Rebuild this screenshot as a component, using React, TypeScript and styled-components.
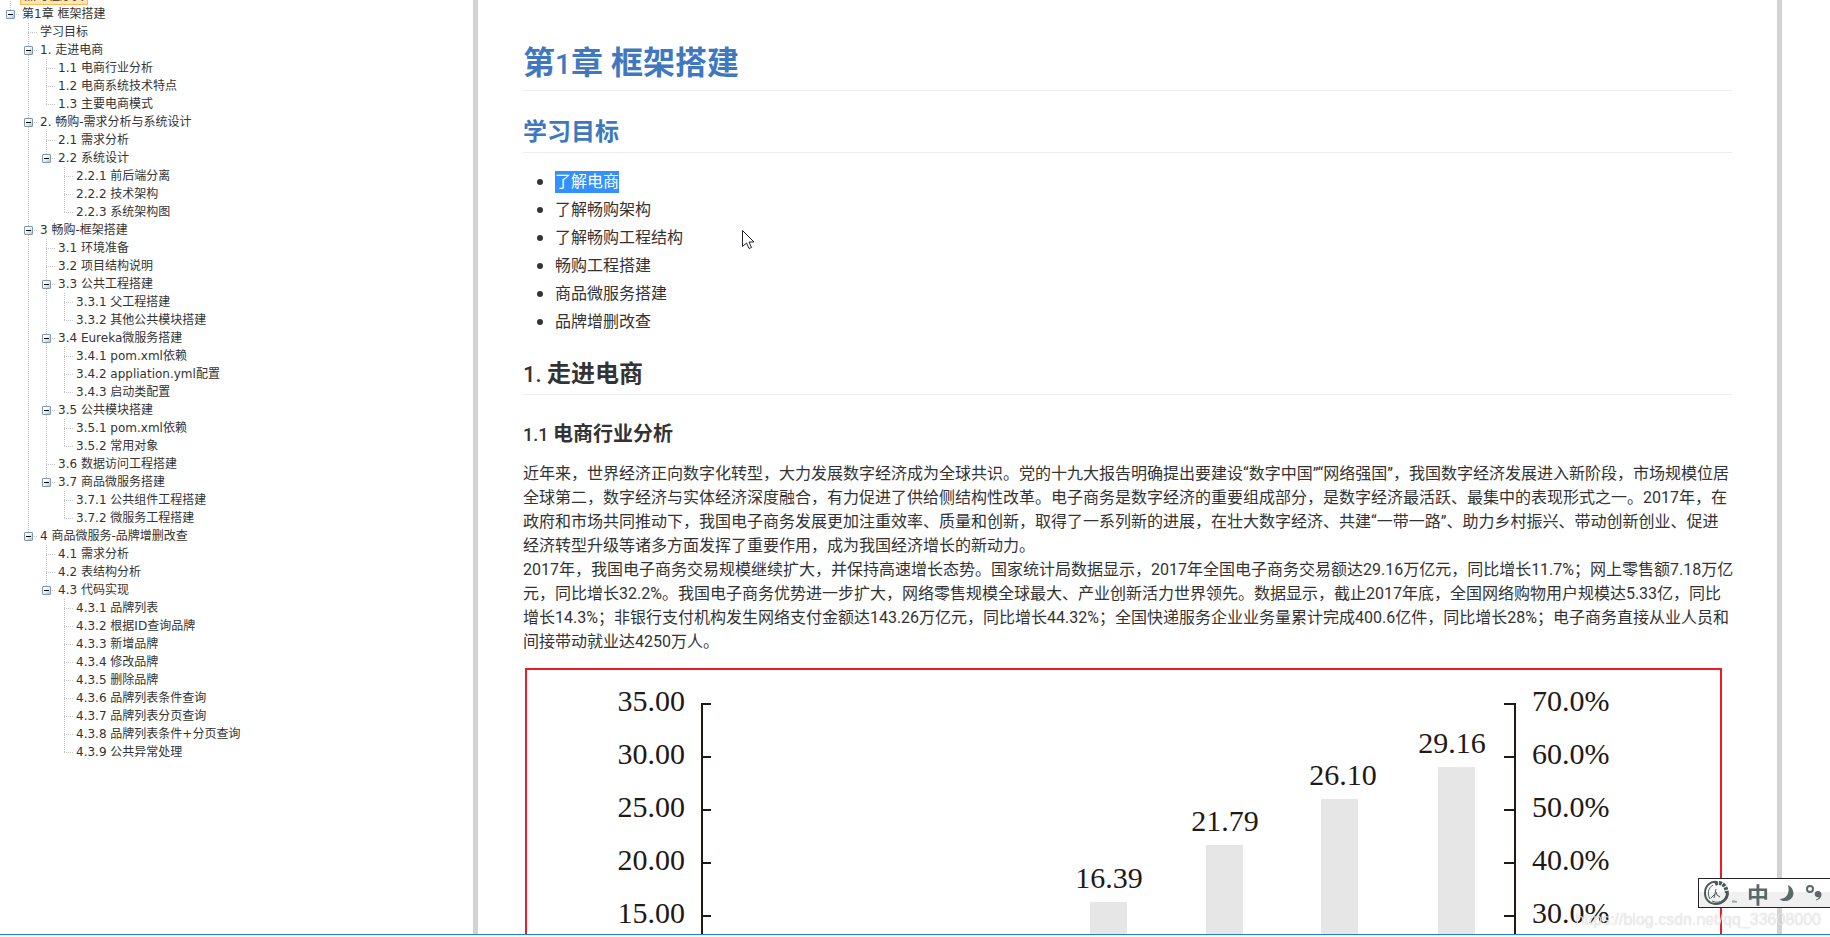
import React from "react";
import styled, { createGlobalStyle, css } from "styled-components";

const GlobalStyle = createGlobalStyle`
  html, body, #root { height: 100%; }
  body { margin: 0; background: #fff; overflow: hidden; }
  *, *::before, *::after { box-sizing: border-box; }
`;

const Page = styled.div`
  display: flex;
  height: 100vh;
  overflow: hidden;
  background: #fff;
  border-bottom: 3px solid #fff;
  font-family: Roboto, "Noto Sans CJK SC", sans-serif;
  color: #333;
`;

const Sidebar = styled.nav`
  flex: 0 0 478px;
  border-right: 5px solid #d3d3d3;
  overflow: hidden;
  font: 12px/18px "DejaVu Sans", "Noto Sans CJK SC", sans-serif;
`;

const TreeRoot = styled.ul`
  list-style: none;
  margin: -13px 0 0;
  padding: 0 0 0 1px;
`;

const Branch = styled.ul`
  list-style: none;
  margin: 0;
  padding: 0 0 0 18px;
`;

const Node = styled.li<{ $last: boolean }>`
  background: repeating-linear-gradient(#c4c4c4 0 1px, transparent 1px 2px) no-repeat 9px
    0 / 1px ${(p) => (p.$last ? "10px" : "100%")};
`;

const NodeRow = styled.div`
  display: flex;
  height: 18px;
`;

const Switch = styled.span`
  flex: 0 0 18px;
  display: flex;
  align-items: center;
  justify-content: center;
  background: repeating-linear-gradient(90deg, #c4c4c4 0 1px, transparent 1px 2px) no-repeat 9px 9px /
    9px 1px;
`;

const Toggle = styled.button`
  width: 9px;
  height: 9px;
  padding: 0;
  display: flex;
  align-items: center;
  justify-content: center;
  border: 1px solid #7898b5;
  border-radius: 1px;
  background: linear-gradient(135deg, #fff 30%, #c9c3b6);

  &::before {
    content: "";
    width: 5px;
    height: 1px;
    background: #000;
  }
`;

const NodeLink = styled.a<{ $selected?: boolean }>`
  padding: 0 3px;
  color: #333;
  text-decoration: none;
  white-space: nowrap;
  ${(p) =>
    p.$selected &&
    css`
      margin-left: 1px;
      background: #ffe6b0;
      border: 1px solid #ffb951;
      line-height: 16px;
    `}
`;

type TreeItem = { label: string; selected?: boolean; children?: TreeItem[] };

const leaf = (label: string): TreeItem => ({ label });

const outline: TreeItem[] = [
  { label: "黑马程序员", selected: true },
  {
    label: "第1章 框架搭建",
    children: [
      leaf("学习目标"),
      {
        label: "1. 走进电商",
        children: [leaf("1.1 电商行业分析"), leaf("1.2 电商系统技术特点"), leaf("1.3 主要电商模式")],
      },
      {
        label: "2. 畅购-需求分析与系统设计",
        children: [
          leaf("2.1 需求分析"),
          {
            label: "2.2 系统设计",
            children: [leaf("2.2.1 前后端分离"), leaf("2.2.2 技术架构"), leaf("2.2.3 系统架构图")],
          },
        ],
      },
      {
        label: "3 畅购-框架搭建",
        children: [
          leaf("3.1 环境准备"),
          leaf("3.2 项目结构说明"),
          { label: "3.3 公共工程搭建", children: [leaf("3.3.1 父工程搭建"), leaf("3.3.2 其他公共模块搭建")] },
          {
            label: "3.4 Eureka微服务搭建",
            children: [leaf("3.4.1 pom.xml依赖"), leaf("3.4.2 appliation.yml配置"), leaf("3.4.3 启动类配置")],
          },
          { label: "3.5 公共模块搭建", children: [leaf("3.5.1 pom.xml依赖"), leaf("3.5.2 常用对象")] },
          leaf("3.6 数据访问工程搭建"),
          { label: "3.7 商品微服务搭建", children: [leaf("3.7.1 公共组件工程搭建"), leaf("3.7.2 微服务工程搭建")] },
        ],
      },
      {
        label: "4 商品微服务-品牌增删改查",
        children: [
          leaf("4.1 需求分析"),
          leaf("4.2 表结构分析"),
          {
            label: "4.3 代码实现",
            children: [
              leaf("4.3.1 品牌列表"),
              leaf("4.3.2 根据ID查询品牌"),
              leaf("4.3.3 新增品牌"),
              leaf("4.3.4 修改品牌"),
              leaf("4.3.5 删除品牌"),
              leaf("4.3.6 品牌列表条件查询"),
              leaf("4.3.7 品牌列表分页查询"),
              leaf("4.3.8 品牌列表条件+分页查询"),
              leaf("4.3.9 公共异常处理"),
            ],
          },
        ],
      },
    ],
  },
];

function TreeNodes({ items }: { items: TreeItem[] }) {
  return (
    <>
      {items.map((item, i) => (
        <Node key={item.label} $last={i === items.length - 1}>
          <NodeRow>
            <Switch>{item.children && <Toggle type="button" aria-label={"折叠 " + item.label} />}</Switch>
            <NodeLink href="#" $selected={item.selected}>
              {item.label}
            </NodeLink>
          </NodeRow>
          {item.children && (
            <Branch>
              <TreeNodes items={item.children} />
            </Branch>
          )}
        </Node>
      ))}
    </>
  );
}

const Content = styled.main`
  flex: 1;
  min-width: 0;
  margin-right: 48px;
  padding: 40px 45px 0;
  border-right: 5px solid #d3d3d3;
  overflow: hidden;
`;

const Numeral = styled.span<{ $size: number }>`
  font-size: ${(p) => p.$size}px;
  font-weight: 500;
  white-space: pre;
`;

const Title = styled.h1`
  margin: 0 0 24px;
  height: 51px;
  border-bottom: 1px solid #eee;
  color: #4078c0;
  font-size: 32px;
  line-height: 46px;
`;

const Heading = styled.h2<{ $accent?: boolean }>`
  margin: 0 0 16px;
  height: 38px;
  border-bottom: 1px solid #eee;
  font-size: 24px;
  line-height: 34px;
  color: ${(p) => (p.$accent ? "#4078c0" : "#333")};
`;

const SubHeading = styled.h3`
  margin: 24px 0 12px;
  font-size: 20px;
  line-height: 30px;
`;

const Goals = styled.ul`
  list-style: none;
  margin: 0 0 22px;
  padding: 0 0 0 14px;
  font-size: 16px;
  line-height: 26px;
`;

const Goal = styled.li`
  display: flex;
  align-items: center;
  gap: 12px;
  height: 26px;
  margin-bottom: 2px;

  &::before {
    content: "";
    width: 6px;
    height: 6px;
    border-radius: 50%;
    background: #333;
  }
`;

const Marked = styled.mark`
  background: #3390ff;
  color: #fff;
  line-height: 22px;
`;

const Paragraph = styled.p`
  margin: 0;
  font-size: 16px;
  line-height: 24px;
  white-space: nowrap;
`;

const Chart = styled.svg`
  display: block;
  width: 100%;
  max-width: 1200px;
  margin-top: 14px;
  font-family: "Liberation Serif", serif;
  font-size: 30px;
  fill: #231815;
`;

const leftAxis = ["35.00", "30.00", "25.00", "20.00", "15.00"];
const rightAxis = ["70.0%", "60.0%", "50.0%", "40.0%", "30.0%"];
const bars = [
  { value: "16.39", x: 567, top: 234, label: 586 },
  { value: "21.79", x: 683, top: 177, label: 702 },
  { value: "26.10", x: 798, top: 131, label: 820 },
  { value: "29.16", x: 915, top: 99, label: 929 },
];

function TradeChart() {
  return (
    <Chart viewBox="0 0 1200 420" role="img" aria-label="电子商务交易额">
      <rect x="3" y="1" width="1195" height="460" fill="#fff" stroke="#ed1c24" strokeWidth="2" />
      <path d="M188 36H179V420M981 36H992V420" fill="none" stroke="#231815" strokeWidth="2" />
      {leftAxis.map((label, i) => (
        <g key={label}>
          <text x="162" y={43 + i * 53} textAnchor="end">
            {label}
          </text>
          <text x="1009" y={43 + i * 53}>
            {rightAxis[i]}
          </text>
          <path d={`M179 ${36 + i * 53}h9M992 ${36 + i * 53}h-11`} stroke="#231815" strokeWidth="2" />
        </g>
      ))}
      {bars.map((bar) => (
        <g key={bar.value}>
          <rect x={bar.x} y={bar.top} width="37" height={420 - bar.top} fill="#e6e6e7" />
          <text x={bar.label} y={bar.top - 14} textAnchor="middle">
            {bar.value}
          </text>
        </g>
      ))}
    </Chart>
  );
}

const Pointer = styled.svg`
  position: fixed;
  left: 742px;
  top: 230px;
`;

const ImeBar = styled.div`
  position: fixed;
  right: -1px;
  bottom: 29px;
  width: 133px;
  height: 30px;
  display: flex;
  align-items: center;
  justify-content: space-between;
  padding: 0 7px 0 4px;
  border: 1px solid #222;
  background: linear-gradient(#fff 45%, #f0f0f0 45%);
`;

const ImeButton = styled.button`
  display: flex;
  padding: 0;
  border: 0;
  background: none;
  color: #5c6868;
  font: 700 22px/26px "Noto Sans CJK SC", sans-serif;
`;

const Watermark = styled.div`
  position: fixed;
  right: 9px;
  bottom: 7px;
  font: 16px/20px "Liberation Sans", sans-serif;
  color: rgba(255, 255, 255, 0.75);
  text-shadow: 0 0 1px rgba(0, 0, 0, 0.3);
`;

const BottomLine = styled.div`
  position: fixed;
  left: 0;
  right: 0;
  bottom: 2px;
  height: 1px;
  background: #1c82d8;
`;

function InputMethodBar() {
  return (
    <ImeBar role="toolbar" aria-label="输入法">
      <ImeButton type="button" aria-label="输入法菜单">
        <svg width="34" height="26" viewBox="0 0 34 26" fill="none" stroke="#4b5858">
          <path d="M14 2C7 1 2 6 2 13s5 11 11 11 12-5 12-11" strokeWidth="2" />
          <path d="M10 5c-5 3-6 9-3 14M9 21c6 3 12 0 14-5" strokeWidth="1" />
          <path d="M12 4c6-3 11 1 12 9" strokeWidth="4" strokeDasharray="3 1" />
          <path d="M24 13c0 4-2 7-5 9" strokeWidth="2" />
          <path d="M8 18l4-4 1-5M13 12l1 3 3 2M12 14l-1 4" strokeWidth="1" />
          <path d="M29 21h3M30 21v2M32 23v-2l1 1 1-1v2" strokeWidth="1" stroke="#899" />
        </svg>
      </ImeButton>
      <ImeButton type="button">中</ImeButton>
      <ImeButton type="button" aria-label="半角">
        <svg width="16" height="18" viewBox="0 0 16 18" fill="#5c6868">
          <path d="M9 1c8 4 7 15-2 16-3 .3-5-.5-6.500-2C8 15 11 9 9 1z" />
        </svg>
      </ImeButton>
      <ImeButton type="button" aria-label="中文标点">
        <svg width="18" height="18" viewBox="0 0 18 18">
          <circle cx="5" cy="5" r="3" fill="none" stroke="#5c6868" strokeWidth="2" />
          <path d="M13 7a3.300 3.300 0 0 1 3.500 3.500c0 3-2 5-5.500 6v-1c2-.5 2.500-1.300 2.700-2.300C11 13.500 9.700 12 9.700 10.300A3.300 3.300 0 0 1 13 7z" fill="#5c6868" />
        </svg>
      </ImeButton>
    </ImeBar>
  );
}

export default function App() {
  return (
    <>
      <GlobalStyle />
      <Page>
        <Sidebar aria-label="目录">
          <TreeRoot>
            <TreeNodes items={outline} />
          </TreeRoot>
        </Sidebar>
        <Content>
          <Title>
            第<Numeral $size={28}>1</Numeral>章 框架搭建
          </Title>
          <Heading $accent>学习目标</Heading>
          <Goals>
            <Goal>
              <Marked>了解电商</Marked>
            </Goal>
            <Goal>了解畅购架构</Goal>
            <Goal>了解畅购工程结构</Goal>
            <Goal>畅购工程搭建</Goal>
            <Goal>商品微服务搭建</Goal>
            <Goal>品牌增删改查</Goal>
          </Goals>
          <Heading>
            <Numeral $size={22}>1. </Numeral>走进电商
          </Heading>
          <SubHeading>
            <Numeral $size={18}>1.1 </Numeral>电商行业分析
          </SubHeading>
          <Paragraph>
            近年来，世界经济正向数字化转型，大力发展数字经济成为全球共识。党的十九大报告明确提出要建设“数字中国”“网络强国”，我国数字经济发展进入新阶段，市场规模位居
            <br />
            全球第二，数字经济与实体经济深度融合，有力促进了供给侧结构性改革。电子商务是数字经济的重要组成部分，是数字经济最活跃、最集中的表现形式之一。2017年，在
            <br />
            政府和市场共同推动下，我国电子商务发展更加注重效率、质量和创新，取得了一系列新的进展，在壮大数字经济、共建“一带一路”、助力乡村振兴、带动创新创业、促进
            <br />
            经济转型升级等诸多方面发挥了重要作用，成为我国经济增长的新动力。
            <br />
            2017年，我国电子商务交易规模继续扩大，并保持高速增长态势。国家统计局数据显示，2017年全国电子商务交易额达29.16万亿元，同比增长11.7%；网上零售额7.18万亿
            <br />
            元，同比增长32.2%。我国电子商务优势进一步扩大，网络零售规模全球最大、产业创新活力世界领先。数据显示，截止2017年底，全国网络购物用户规模达5.33亿，同比
            <br />
            增长14.3%；非银行支付机构发生网络支付金额达143.26万亿元，同比增长44.32%；全国快递服务企业业务量累计完成400.6亿件，同比增长28%；电子商务直接从业人员和
            <br />
            间接带动就业达4250万人。
          </Paragraph>
          <TradeChart />
        </Content>
      </Page>
      <Pointer width="14" height="20" viewBox="0 0 14 20">
        <path d="M.5.5v16l4-3.500 2.500 5.500 2.500-1-2.500-5.500h5z" fill="#fff" stroke="#223" />
      </Pointer>
      <InputMethodBar />
      <Watermark>https://blog.csdn.net/qq_33608000</Watermark>
      <BottomLine />
    </>
  );
}
